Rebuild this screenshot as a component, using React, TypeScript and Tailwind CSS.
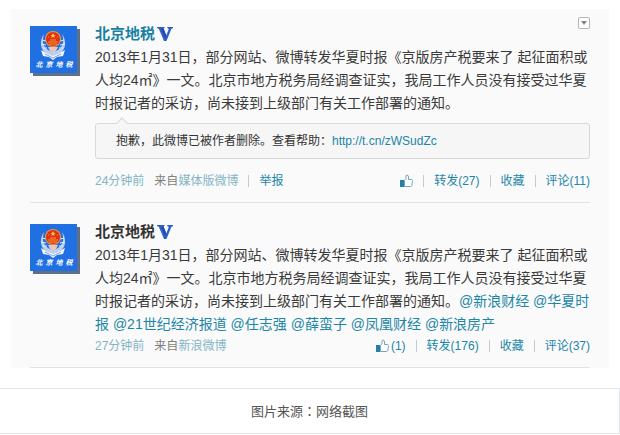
import React from 'react';

const LINK = 'text-[#1c86a8] hover:underline';

const Avatar = () => (
  <svg viewBox="0 0 50 50" className="w-[50px] h-[50px] shrink-0" role="img" aria-label="北京地税">
    <rect x="3" y="3" width="47" height="47" fill="#5f6f86" />
    <rect width="47" height="47" fill="#2070e4" />
    {/* wheat wreath */}
    <path d="M14 8C9 15 10 24 17 28L23 31L29 28C36 24 37 15 32 8C35 17 32 24 23 26C14 24 11 17 14 8Z" fill="#b9cff4" />
    <path d="M12 14l4 1M11 18l5 1M13 22l4 0M34 14l-4 1M35 18l-5 1M33 22l-4 0" stroke="#e6eefb" strokeWidth="1" />
    <path d="M11 24L18 28L23 30L28 28L35 24L33 30L27 31L23 34L19 31L13 30Z" fill="#f3f6fc" />
    <path d="M15 28l8 4 8-4" fill="none" stroke="#7da4e4" strokeWidth="1" />
    {/* emblem */}
    <circle cx="23" cy="13" r="8" fill="#f09a3a" />
    <circle cx="23" cy="13" r="7" fill="#df3015" />
    <path d="M23 7l1 2h2l-2 1 1 2-2-1-2 1 1-2-2-1h2z" fill="#ffc84e" />
    <path d="M18 16h10M20 14h6M19 18h8M18 11h1M27 11h1" stroke="#f59a35" strokeWidth="1" />
    <path d="M18 21h10l-2 4-3 2-3-2z" fill="#e9c4bc" />
    {['北', '京', '地', '税'].map((c, i) => (
      <text key={c} x={9 + i * 10} y="41" textAnchor="middle" fontSize="7" fontWeight="700" fill="#fff" className="font-['Noto_Sans_CJK_SC',sans-serif] italic">
        {c}
      </text>
    ))}
  </svg>
);

const VerifiedIcon = () => (
  <svg viewBox="0 0 16 14" className="w-4 h-[14px]" aria-hidden="true">
    <path d="M0 0H7.500V1L6.500 1.500L9.300 8.500L11.800 2L10.300 1V0H16V1L14.300 2L9.500 14H7L1.800 1.800L0 1Z" fill="#2c5fcb" />
    <path d="M6.500 1.500L9.300 8.500L8.200 11.500L4.500 1.500Z" fill="#2049a8" />
  </svg>
);

const ThumbIcon = () => (
  <svg viewBox="0 0 13 14" className="w-[13px] h-[14px]" aria-hidden="true">
    <path d="M4.500 6.500L6 4.500V1.500C7.500 0.500 8.500 1.500 8.500 3V5.500H11.500C12.500 5.500 12.600 6.500 12.400 7.500L11.800 11.500C11.600 12.300 11.200 12.500 10.500 12.500H4.500Z" fill="#fff" stroke="#6fa6bd" strokeWidth="1" />
    <rect x="0" y="6" width="4" height="7" fill="#2680a6" />
  </svg>
);

const Separator = () => <span className="w-px h-3 bg-[#c3cbd0]" />;

type PostProps = {
  muted?: boolean;
  source: string;
  time: string;
  likes?: number;
  reposts: number;
  comments: number;
  mentions?: string[];
  deleted?: boolean;
};

const Post = ({ muted, source, time, likes, reposts, comments, mentions, deleted }: PostProps) => (
  <article className="relative flex gap-[15px] border-b border-[#dfe3e5]">
    <div className="pt-1">
      <Avatar />
    </div>

    <div className="flex-1 min-w-0">
      <div className="flex items-center gap-[2px] h-6">
        <a href="#profile" className={`text-[15px] font-bold ${muted ? 'text-[#333]' : 'text-[#1880a2]'}`}>
          北京地税
        </a>
        <VerifiedIcon />
      </div>

      <p className="text-[14px] leading-[23px] text-[#3a3a3a]">
        2013年1月31日，部分网站、微博转发华夏时报《京版房产税要来了 起征面积或人均24㎡》一文。北京市地方税务局经调查证实，我局工作人员没有接受过华夏时报记者的采访，尚未接到上级部门有关工作部署的通知。
        {mentions?.map((m, i) => (
          <React.Fragment key={m}>
            {i > 0 && ' '}
            <a href="#mention" className={LINK}>@{m}</a>
          </React.Fragment>
        ))}
      </p>

      {deleted && (
        <div className="relative mt-2 px-5 py-2 border border-[#d5d9da] rounded-[3px] bg-[#f6f6f6] text-[12px] leading-[18px] text-[#333]">
          <span className="absolute left-[22px] -top-[5px] size-2 rotate-45 border-l border-t border-[#d5d9da] bg-[#f6f6f6]" />
          抱歉，此微博已被作者删除。查看帮助：
          <a href="#help" className={LINK}>http://t.cn/zWSudZc</a>
        </div>
      )}

      <div className={`flex items-center justify-between text-[12px] leading-[18px] pb-3 ${deleted ? 'pt-[13px]' : 'pt-px'}`}>
        <div className="flex items-center gap-[10px]">
          <a href="#time" className="text-[#82b5c4]">{time}</a>
          <span className="text-[#808080]">
            来自<a href="#source" className="text-[#82b5c4]">{source}</a>
          </span>
          {deleted && (
            <>
              <Separator />
              <button className={LINK}>举报</button>
            </>
          )}
        </div>
        <div className="flex items-center gap-[10px]">
          <button aria-label="赞" className={`flex items-center gap-[2px] ${LINK}`}>
            <ThumbIcon />
            {likes && <span>({likes})</span>}
          </button>
          <Separator />
          <button className={LINK}>转发({reposts})</button>
          <Separator />
          <button className={LINK}>收藏</button>
          <Separator />
          <button className={LINK}>评论({comments})</button>
        </div>
      </div>
    </div>

    {deleted && (
      <button aria-label="更多" className="absolute right-0 -top-[5px] size-3 flex items-center justify-center border border-[#b5b5b5] rounded-[2px] bg-white">
        <svg viewBox="0 0 6 4" className="w-[6px] h-1" aria-hidden="true">
          <path d="M0 0h6L3 4z" fill="#858585" />
        </svg>
      </button>
    )}
  </article>
);

export default function App() {
  return (
    <main lang="zh-CN" className="bg-white font-['Liberation_Sans','Noto_Sans_CJK_SC',sans-serif]">
      <section className="mx-[11px] mt-[9px] px-[19px] pt-[13px] bg-[#fafafa] flex flex-col gap-[17px]">
        <Post time="24分钟前" source="媒体版微博" reposts={27} comments={11} deleted />
        <Post
          muted
          time="27分钟前"
          source="新浪微博"
          likes={1}
          reposts={176}
          comments={37}
          mentions={['新浪财经', '华夏时报', '21世纪经济报道', '任志强', '薛蛮子', '凤凰财经', '新浪房产']}
        />
      </section>
      <p className="mt-5 py-3 border-y border-r border-[#dfe5ec] text-center text-[13px] leading-5 text-[#555] font-['Noto_Sans_CJK_SC',sans-serif]">
        图片来源<span lang="zh-TW" className="font-['Noto_Sans_CJK_TC',sans-serif]">：</span>网络截图
      </p>
    </main>
  );
}
